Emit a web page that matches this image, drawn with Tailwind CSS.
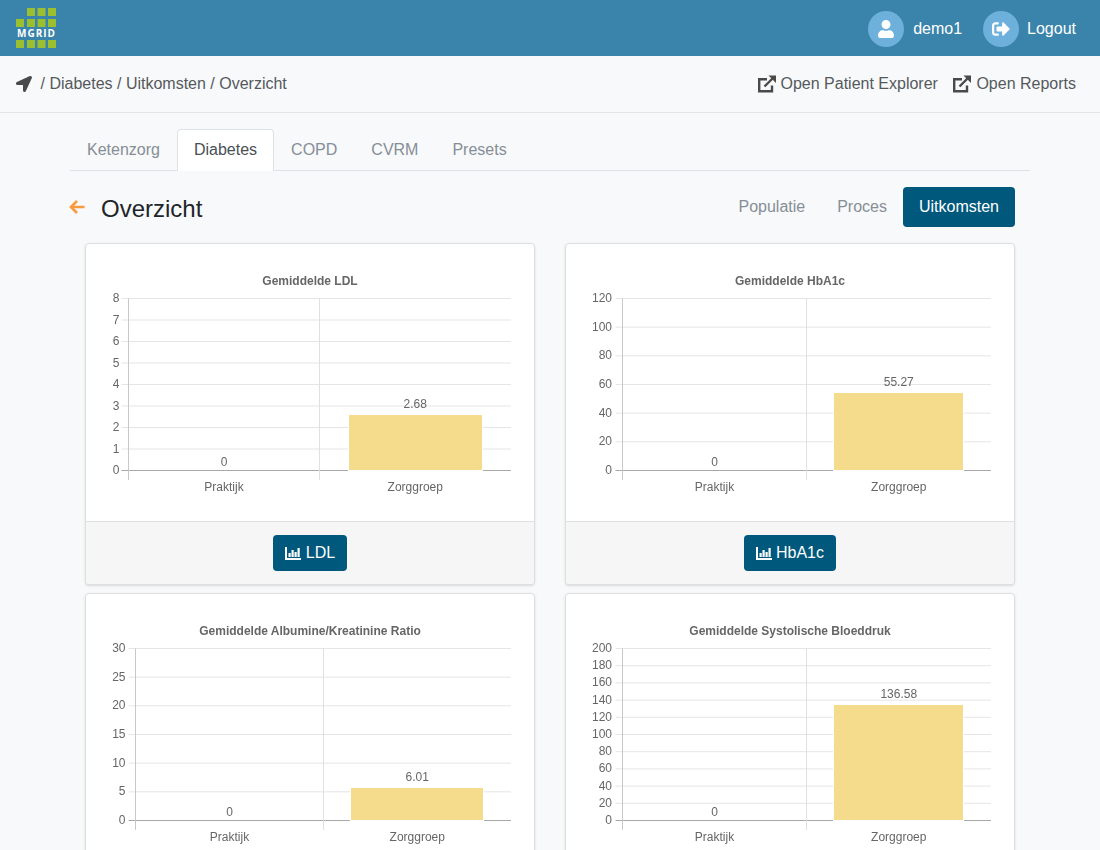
<!DOCTYPE html>
<html lang="en">

<head>
  <meta charset="UTF-8">
  <meta name="viewport" content="width=device-width, initial-scale=1.0">
  <title>MGRID Overzicht</title>
  <script src="https://cdn.jsdelivr.net/npm/@tailwindcss/browser@4"></script>
</head>

<body class="bg-[#f8f9fb] font-['Liberation_Sans',Arial,sans-serif] h-[850px] overflow-hidden text-[16px] leading-6 text-[#55595c]">
  <!-- Header -->
  <header class="h-14 bg-[#3a83ab] flex items-center justify-between pl-4 pr-6 text-white">
    <svg width="40" height="40" viewBox="0 0 40 40" class="block">
      <g fill="#9bbf2f">
        <rect x="11" y="0" width="8" height="8" /><rect x="21.5" y="0" width="8" height="8" /><rect x="32" y="0" width="8" height="8" />
        <rect x="0" y="11" width="8" height="8" /><rect x="11" y="11" width="8" height="8" /><rect x="21.5" y="11" width="8" height="8" /><rect x="32" y="11" width="8" height="8" />
        <rect x="0" y="32" width="8" height="8" /><rect x="11" y="32" width="8" height="8" /><rect x="21.5" y="32" width="8" height="8" /><rect x="32" y="32" width="8" height="8" />
      </g>
      <text x="20.500" y="29" text-anchor="middle" font-family="Open Sans" font-size="10" font-weight="700" letter-spacing="1" fill="#ffffff">MGRID</text>
    </svg>
    <div class="flex items-center mt-[2px]">
      <span class="w-9 h-9 rounded-full bg-[#6cb0db] flex items-center justify-center">
        <svg width="16" height="18" viewBox="0 0 448 512" fill="#fff"><path d="M224 256c70.7 0 128-57.3 128-128S294.7 0 224 0 96 57.3 96 128s57.3 128 128 128zm89.6 32h-16.7c-22.2 10.2-46.9 16-72.9 16s-50.6-5.8-72.9-16h-16.7C60.2 288 0 348.2 0 422.4V464c0 26.5 21.5 48 48 48h352c26.5 0 48-21.5 48-48v-41.6c0-74.2-60.2-134.4-134.4-134.4z" /></svg>
      </span>
      <span class="ml-[9px]">demo1</span>
      <span class="ml-[21px] w-9 h-9 rounded-full bg-[#6cb0db] flex items-center justify-center">
        <svg width="18" height="18" viewBox="0 0 512 512" fill="#fff"><path d="M497 273L329 441c-15 15-41 4.5-41-17v-96H152c-13.3 0-24-10.7-24-24v-96c0-13.3 10.7-24 24-24h136V88c0-21.4 25.9-32 41-17l168 168c9.3 9.4 9.3 24.6 0 34zM192 436v-40c0-6.6-5.4-12-12-12H96c-17.7 0-32-14.3-32-32V160c0-17.7 14.3-32 32-32h84c6.6 0 12-5.4 12-12V76c0-6.6-5.4-12-12-12H96c-53 0-96 43-96 96v192c0 53 43 96 96 96h84c6.6 0 12-5.4 12-12z" /></svg>
      </span>
      <span class="ml-2">Logout</span>
    </div>
  </header>

  <!-- Breadcrumb bar -->
  <div class="h-[57px] border-b border-[#e4e5e7] flex items-center justify-between pl-4 pr-6">
    <div class="flex items-center">
      <svg width="16" height="16" viewBox="0 0 512 512" fill="#4a4a4a"><path d="M444.52 3.52L28.74 195.42c-47.97 22.39-31.98 92.75 19.19 92.75h175.91v175.91c0 51.17 70.36 67.17 92.75 19.19l191.9-415.78c15.99-38.39-25.59-79.97-63.97-63.97z" /></svg>
      <span class="ml-[8.5px]">/ Diabetes / Uitkomsten / Overzicht</span>
    </div>
    <div class="flex items-center">
      <svg width="18" height="18" viewBox="0 0 18 18" fill="none" stroke="#4a4a4a" stroke-width="2.4"><path d="M14 10.500v5.800H1.200V4.200H9" /><path d="M6.500 11.500L15.500 2.500" /><path d="M10.500 0.500H18V8z" fill="#4a4a4a" stroke="none" /></svg>
      <span class="ml-[4.5px]">Open Patient Explorer</span>
      <svg width="18" height="18" viewBox="0 0 18 18" fill="none" stroke="#4a4a4a" stroke-width="2.4" class="ml-[15.5px]"><path d="M14 10.500v5.800H1.200V4.200H9" /><path d="M6.500 11.500L15.500 2.500" /><path d="M10.500 0.500H18V8z" fill="#4a4a4a" stroke="none" /></svg>
      <span class="ml-[5px]">Open Reports</span>
    </div>
  </div>

  <main class="px-[70px] pt-4">
    <!-- Tabs -->
    <nav class="h-[42px] border-b border-[#dee2e6] flex text-[#868e96]">
      <a class="px-[17px] pt-[9px]">Ketenzorg</a>
      <a class="px-4 pt-[8px] h-[42px] bg-white border border-b-0 border-[#dee2e6] rounded-t text-[#495057]">Diabetes</a>
      <a class="px-[17px] pt-[9px]">COPD</a>
      <a class="px-[17px] pt-[9px]">CVRM</a>
      <a class="px-[17px] pt-[9px]">Presets</a>
    </nav>

    <!-- Title row -->
    <div class="h-10 mt-4 pr-[15px] flex items-center justify-between">
      <div class="flex items-center">
        <svg width="17" height="16" viewBox="0 0 17 16" fill="none" stroke="#f99a3c" stroke-width="2.6" class="ml-[-2px]"><path d="M16.500 8H3M9 2L3 8l6 6" /></svg>
        <h1 class="ml-[16px] text-[24px] leading-8 text-[#212529] mt-[4px]">Overzicht</h1>
      </div>
      <div class="flex items-center text-[#868e96]">
        <a class="px-4 py-2">Populatie</a>
        <a class="px-4 py-2">Proces</a>
        <a class="px-4 py-2 rounded bg-[#00587c] text-white">Uitkomsten</a>
      </div>
    </div>

    <!-- Cards -->
    <div class="mt-4 px-[15px] grid grid-cols-2 gap-x-[30px] gap-y-2">
      <section class="h-[342px] bg-white border border-[#dfdfdf] rounded shadow-sm flex flex-col">
        <svg id="chart-ldl" width="448" height="277" class="block will-change-transform"></svg>
        <div class="flex-1 bg-[#f6f6f6] border-t border-[#dfdfdf] rounded-b flex items-center justify-center">
          <button class="h-9 px-3 rounded bg-[#00587c] text-white flex items-center gap-[5px]">
            <svg width="16" height="13" viewBox="0 0 16 13" fill="#fff"><path d="M0 0h2v11H16v2H0z" /><rect x="3.500" y="6" width="2.200" height="4" /><rect x="6.500" y="3" width="2.200" height="7" /><rect x="9.500" y="5" width="2.200" height="5" /><rect x="12.500" y="1" width="2.200" height="9" /></svg>
            LDL
          </button>
        </div>
      </section>
      <section class="h-[342px] bg-white border border-[#dfdfdf] rounded shadow-sm flex flex-col">
        <svg id="chart-hba1c" width="448" height="277" class="block will-change-transform"></svg>
        <div class="flex-1 bg-[#f6f6f6] border-t border-[#dfdfdf] rounded-b flex items-center justify-center">
          <button class="h-9 px-3 rounded bg-[#00587c] text-white flex items-center gap-1">
            <svg width="16" height="13" viewBox="0 0 16 13" fill="#fff"><path d="M0 0h2v11H16v2H0z" /><rect x="3.500" y="6" width="2.200" height="4" /><rect x="6.500" y="3" width="2.200" height="7" /><rect x="9.500" y="5" width="2.200" height="5" /><rect x="12.500" y="1" width="2.200" height="9" /></svg>
            HbA1c
          </button>
        </div>
      </section>
      <section class="h-[342px] bg-white border border-[#dfdfdf] rounded shadow-sm">
        <svg id="chart-acr" width="448" height="277" class="block will-change-transform"></svg>
      </section>
      <section class="h-[342px] bg-white border border-[#dfdfdf] rounded shadow-sm">
        <svg id="chart-bp" width="448" height="277" class="block will-change-transform"></svg>
      </section>
    </div>
  </main>

  <script>
    // coordinates are inside the card, 1px border already taken off
    const TOP = 54.5, BOTTOM = 226.5, TICK_END = 236;

    function add(svg, name, attrs, text) {
      const el = document.createElementNS('http://www.w3.org/2000/svg', name);
      for (const key in attrs) el.setAttribute(key, attrs[key]);
      if (text !== undefined) el.textContent = text;
      svg.appendChild(el);
    }

    function drawChart(id, c) {
      const svg = document.getElementById(id);
      const label = { 'font-size': 12, fill: '#666', 'text-anchor': 'middle' };
      add(svg, 'text', { x: 224, y: 41, 'font-size': 12, 'font-weight': 700, fill: '#666', 'text-anchor': 'middle' }, c.title);

      c.ticks.forEach((tick, i) => {
        const y = TOP + (BOTTOM - TOP) * i / (c.ticks.length - 1);
        const last = i === c.ticks.length - 1;
        add(svg, 'line', { x1: c.left - 7, x2: c.right, y1: y, y2: y, stroke: last ? '#a8a8a8' : '#e5e5e5' });
        add(svg, 'text', { x: c.left - c.labelGap, y: y + 3.5, 'font-size': 12, fill: '#666', 'text-anchor': 'end' }, tick);
      });

      add(svg, 'line', { x1: c.left, x2: c.left, y1: TOP, y2: TICK_END, stroke: '#c8c8c8' });
      add(svg, 'line', { x1: c.mid, x2: c.mid, y1: TOP, y2: TICK_END, stroke: '#e0e0e0' });

      add(svg, 'rect', { x: c.barX, y: c.barTop, width: c.barW, height: BOTTOM - c.barTop, fill: '#f4dc8c', stroke: '#fff', 'stroke-width': 1 });

      const x1 = (c.left + c.mid) / 2, x2 = (c.mid + c.right) / 2;
      add(svg, 'text', { ...label, x: x1, y: 222 }, '0');
      add(svg, 'text', { ...label, x: x2, y: c.barTop - 7 }, c.value);
      add(svg, 'text', { ...label, x: x1, y: 247 }, 'Praktijk');
      add(svg, 'text', { ...label, x: x2, y: 247 }, 'Zorggroep');
    }

    drawChart('chart-ldl', {
      title: 'Gemiddelde LDL', ticks: [8, 7, 6, 5, 4, 3, 2, 1, 0], value: '2.68', labelGap: 9,
      left: 42.5, mid: 233.5, right: 425, barX: 262.5, barW: 134, barTop: 170.5
    });
    drawChart('chart-hba1c', {
      title: 'Gemiddelde HbA1c', ticks: [120, 100, 80, 60, 40, 20, 0], value: '55.27', labelGap: 10.5,
      left: 56.5, mid: 240.5, right: 425, barX: 267.5, barW: 130, barTop: 148.5
    });
    drawChart('chart-acr', {
      title: 'Gemiddelde Albumine/Kreatinine Ratio', ticks: [30, 25, 20, 15, 10, 5, 0], value: '6.01', labelGap: 10,
      left: 49.5, mid: 237.5, right: 425, barX: 264.5, barW: 133, barTop: 193.5
    });
    drawChart('chart-bp', {
      title: 'Gemiddelde Systolische Bloeddruk', ticks: [200, 180, 160, 140, 120, 100, 80, 60, 40, 20, 0], value: '136.58', labelGap: 10.5,
      left: 56.5, mid: 240.5, right: 425, barX: 267.5, barW: 130, barTop: 110.5
    });
  </script>
</body>

</html>
